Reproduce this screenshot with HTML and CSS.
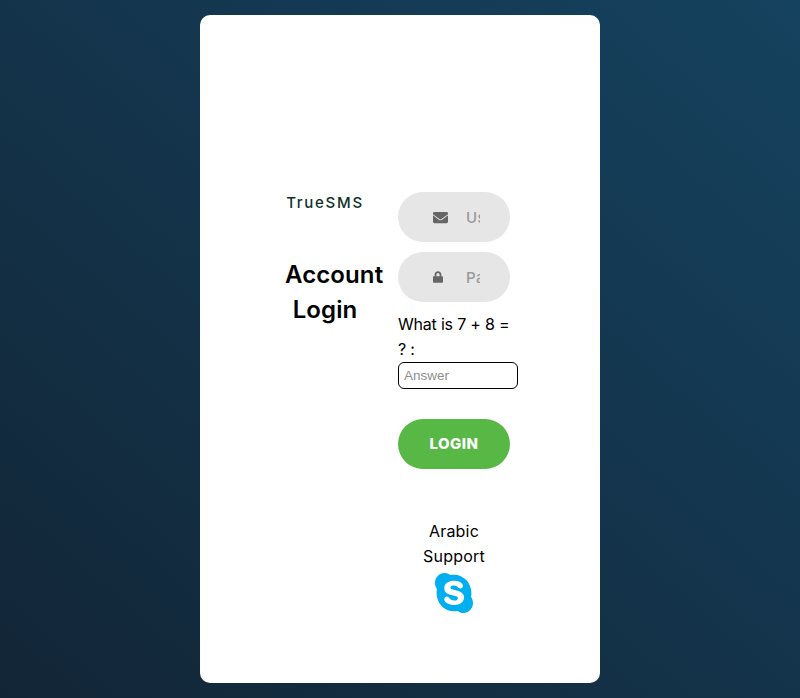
FILE: index.html
```html
<!DOCTYPE html>
<html>
<head>
  <meta charset="UTF-8">
  <title>TrueSMS - Account Login</title>
  <link rel="stylesheet" href="styles.css">
</head>
<body>
  <div class="login-card">
    <div class="login-row">

      <!-- Brand column -->
      <div class="brand">
        <div class="brand-logo">TrueSMS</div>
        <h1 class="brand-title">Account Login</h1>
      </div>

      <!-- Form column -->
      <form class="login-form">
        <div class="input-wrap">
          <span class="input-icon">
            <svg class="icon-mail" viewBox="0 0 512 512"><path d="M502.3 190.8c3.9-3.1 9.7-.2 9.7 4.7V400c0 26.5-21.5 48-48 48H48c-26.5 0-48-21.5-48-48V195.6c0-5 5.7-7.8 9.7-4.7 22.4 17.4 52.1 39.5 154.1 113.6 21.1 15.4 56.7 47.8 92.2 47.6 35.7.3 72-32.8 92.3-47.6 102-74.1 131.6-96.3 154-113.7zM256 320c23.2.4 56.6-29.2 73.4-41.4 132.7-96.3 142.8-104.7 173.4-128.7 5.8-4.5 9.2-11.5 9.2-18.9v-19c0-26.5-21.5-48-48-48H48C21.5 64 0 85.5 0 112v19c0 7.4 3.4 14.3 9.2 18.9 30.6 23.9 40.7 32.4 173.4 128.7 16.8 12.2 50.2 41.8 73.4 41.4z"/></svg>
          </span>
          <input type="text" placeholder="Username">
        </div>
        <div class="input-wrap">
          <span class="input-icon">
            <svg class="icon-lock" viewBox="0 0 448 512"><path d="M400 224h-24v-72C376 68.2 307.8 0 224 0S72 68.2 72 152v72H48c-26.5 0-48 21.5-48 48v192c0 26.5 21.5 48 48 48h352c26.5 0 48-21.5 48-48V272c0-26.5-21.5-48-48-48zm-104 0H152v-72c0-39.7 32.3-72 72-72s72 32.3 72 72v72z"/></svg>
          </span>
          <input type="password" placeholder="Password">
        </div>

        <label class="captcha-label">What is 7 + 8 = ? :</label>
        <input class="captcha-input" type="text" placeholder="Answer">

        <button class="login-btn" type="button">LOGIN</button>

        <div class="support">
          <div class="support-text">Arabic Support</div>
          <svg class="icon-skype" viewBox="0 32 448 448" preserveAspectRatio="none"><path d="M424.7 299.8c2.9-14 4.7-28.9 4.7-43.8 0-113.5-91.9-205.3-205.3-205.3-14.9 0-29.7 1.7-43.8 4.7C161.3 40.7 137.7 32 112 32 50.2 32 0 82.2 0 144c0 25.7 8.7 49.3 23.3 68.2-2.9 14-4.7 28.9-4.7 43.8 0 113.5 91.9 205.3 205.3 205.3 14.9 0 29.7-1.7 43.8-4.7 19 14.6 42.6 23.3 68.2 23.3 61.8 0 112-50.2 112-112 .1-25.6-8.6-49.2-23.2-68.1zm-194.6 91.5c-65.6 0-120.5-29.2-120.5-65 0-16 9-30.6 29.5-30.6 31.2 0 34.1 44.9 88.1 44.9 25.7 0 42.3-11.4 42.3-26.3 0-18.7-16-21.6-42-28-62.5-15.4-117.8-22-117.8-87.2 0-59.2 58.6-81.1 109.1-81.1 55.1 0 110.8 21.9 110.8 55.4 0 16.9-11.4 31.8-30.3 31.8-28.3 0-29.2-33.5-75-33.5-25.7 0-42 7-42 22.5 0 19.8 20.8 21.8 69.1 33 41.4 9.3 90.7 26.8 90.7 77.6 0 59.1-57.1 86.5-112 86.5z"/></svg>
        </div>
      </form>

    </div>
  </div>
</body>
</html>
```
FILE: styles.css
```css
* {
  box-sizing: border-box;
}

html, body {
  height: 100%;
}

body {
  margin: 0;
  padding: 15px 0;
  font-family: Inter, "Liberation Sans", sans-serif;
  color: #000;
  background-color: #13344a;
  background-image: linear-gradient(to top right, #122536, #15425f);
  display: flex;
  justify-content: center;
}

.login-card {
  width: 400px;
  height: 668px;
  padding: 177px 0 0 85px;
  background-color: #fff;
  border-radius: 10px;
}

.login-row {
  display: flex;
  align-items: flex-start;
  gap: 33px;
}

.brand {
  width: 80px;
  flex-shrink: 0;
  padding-top: 1px;
}

.brand-logo {
  font-size: 15px;
  font-weight: 500;
  letter-spacing: 1.7px;
  line-height: 20px;
  color: #10302c;
  white-space: nowrap;
  text-align: center;
}

.brand-title {
  margin: 44px 0 0;
  font-size: 24px;
  font-weight: 600;
  line-height: 35px;
  letter-spacing: 0.1px;
  text-align: center;
}

.login-form {
  width: 112px;
  display: flex;
  flex-direction: column;
  align-items: flex-start;
}

.input-wrap {
  position: relative;
  width: 112px;
  height: 50px;
  margin-bottom: 10px;
}

.input-wrap input {
  width: 100%;
  height: 100%;
  padding: 0 30px 0 68px;
  border: none;
  outline: none;
  border-radius: 25px;
  background-color: #e6e6e6;
  font-family: inherit;
  font-size: 15px;
  font-weight: 500;
}

.input-wrap input::placeholder {
  color: #999;
  letter-spacing: 0.5px;
  opacity: 1;
}

.input-icon {
  position: absolute;
  top: 0;
  left: 35px;
  width: 15px;
  height: 100%;
  display: flex;
  align-items: center;
  justify-content: flex-start;
  fill: #666;
}

.icon-mail {
  width: 15px;
  height: 15px;
}

.icon-lock {
  width: 10px;
  height: 12px;
}

.captcha-label {
  font-size: 16px;
  line-height: 25px;
  letter-spacing: -0.2px;
}

.captcha-input {
  width: 120px;
  height: 27px;
  padding: 0 5px;
  border: 1px solid #000;
  border-radius: 6px;
  outline: none;
  font-family: "Liberation Sans", Arial, sans-serif;
  font-size: 13.5px;
}

.captcha-input::placeholder {
  color: #8f8f8f;
  opacity: 1;
}

.login-btn {
  width: 112px;
  height: 50px;
  margin-top: 30px;
  padding: 0 0 2px;
  border: none;
  border-radius: 25px;
  background-color: #57b846;
  color: #fff;
  font-family: inherit;
  font-size: 15px;
  font-weight: 800;
  letter-spacing: 0.5px;
  cursor: pointer;
}

.support {
  width: 112px;
  margin-top: 50px;
  text-align: center;
}

.support-text {
  font-size: 16px;
  line-height: 25px;
  letter-spacing: 0.2px;
  padding: 0 16px;
}

.icon-skype {
  display: block;
  width: 38px;
  height: 40px;
  margin: 4px auto 0;
  fill: #00aff0;
}
```
